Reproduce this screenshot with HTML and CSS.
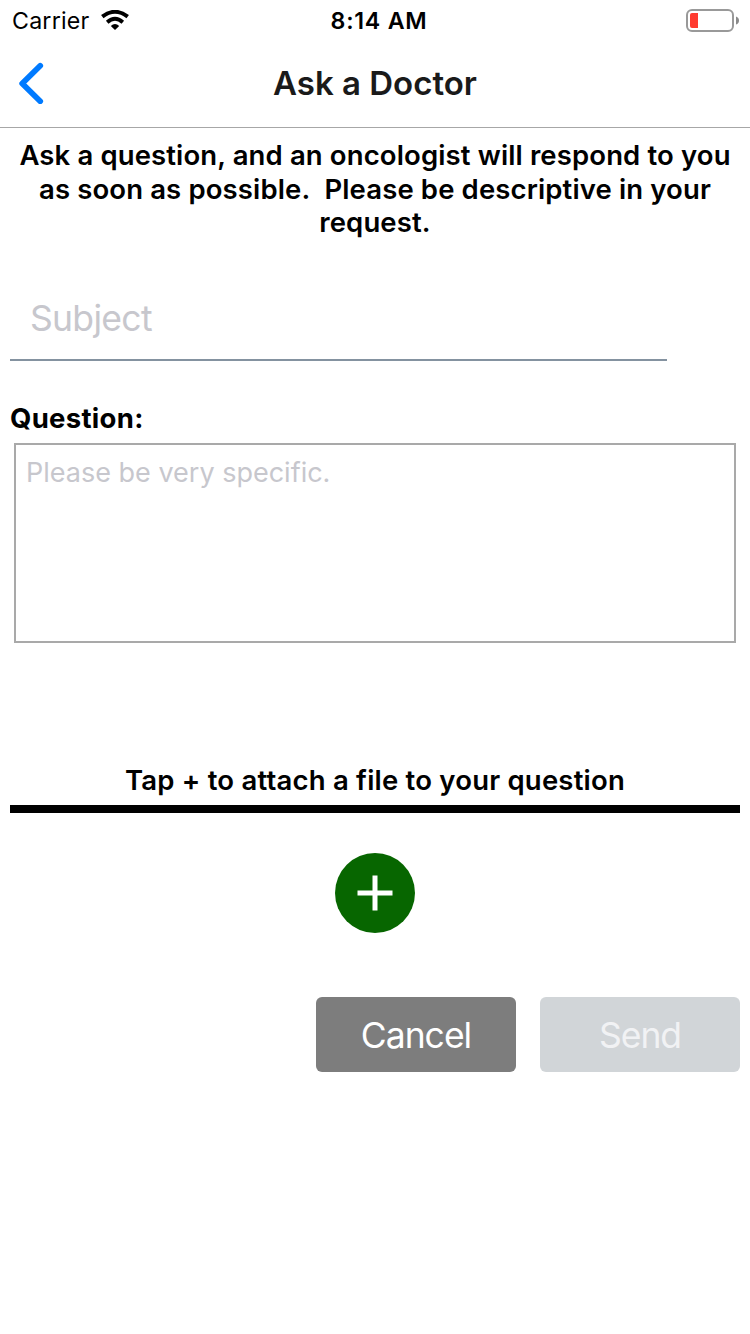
FILE: index.html
```html
<!DOCTYPE html>
<html lang="en">
<head>
  <meta charset="UTF-8">
  <title>Ask a Doctor</title>
  <link rel="stylesheet" href="styles.css">
</head>
<body>

  <!-- Status bar -->
  <div class="status">
    <div class="status-left">
      <span class="carrier">Carrier</span>
      <svg class="wifi" width="28" height="20" viewBox="0 0 28 20">
        <path d="M1.3 6.7 Q14 -3.1 26.7 6.7" fill="none" stroke="#000" stroke-width="4"/>
        <path d="M6.2 12.2 Q14 5.5 21.8 12.2" fill="none" stroke="#000" stroke-width="3.9"/>
        <path d="M14 20 L9.8 16 Q14 12 18.2 16 Z"/>
      </svg>
    </div>
    <span class="clock">8:14 AM</span>
    <svg class="battery" width="54" height="24" viewBox="0 0 54 24">
      <rect x="1" y="1" width="46" height="21" rx="5" fill="none" stroke="#999" stroke-width="2"/>
      <path d="M4 6 Q4 4 6 4 H12 V19 H6 Q4 19 4 17 Z" fill="#ff3b30"/>
      <path d="M50 7.5 Q53 8.5 53 11.5 Q53 14.5 50 15.5 Z" fill="#8a8a8a"/>
    </svg>
  </div>

  <!-- Header -->
  <div class="header">
    <svg class="back" width="26" height="42" viewBox="0 0 26 42">
      <path d="M22.2 3.8 L4.2 21.5 L22.2 39.2" fill="none" stroke="#007aff" stroke-width="5.8" stroke-linecap="round" stroke-linejoin="round"/>
    </svg>
    <h1>Ask a Doctor</h1>
  </div>

  <!-- Form -->
  <div class="content">
    <p class="intro">Ask a question, and an oncologist will respond to you<br>as soon as possible.&nbsp; Please be descriptive in your<br>request.</p>
    <div class="subject">Subject</div>
    <div class="label">Question:</div>
    <div class="question">Please be very specific.</div>
    <p class="attach">Tap + to attach a file to your question</p>
    <div class="add">
      <svg width="36" height="36" viewBox="0 0 36 36">
        <path d="M18 .5 V35.5 M.5 18 H35.5" stroke="#fff" stroke-width="5"/>
      </svg>
    </div>
    <div class="buttons">
      <div class="btn cancel">Cancel</div>
      <div class="btn send">Send</div>
    </div>
  </div>

</body>
</html>
```

FILE: styles.css
```css
* {
  box-sizing: border-box;
}

body {
  margin: 0;
  font-family: Inter, 'Liberation Sans', sans-serif;
  background-color: #fff;
  color: #000;
}

.status {
  display: grid;
  grid-template-columns: 1fr auto 1fr;
  height: 40px;
  padding: 0 10px 0 12px;
  line-height: 42px;
  font-size: 23.2px;
}

.status-left {
  display: flex;
  gap: 12px;
}

.carrier {
  letter-spacing: 0.2px;
}

.wifi {
  margin-top: 10px;
}

.clock {
  padding-left: 6px;
  font-weight: 600;
  letter-spacing: 0.75px;
}

.battery {
  justify-self: end;
  margin-top: 9px;
}

.header {
  display: grid;
  grid-template-columns: 60px 1fr 60px;
  height: 88px;
  border-bottom: 1px solid #a7a7a7;
}

.back {
  margin: 22px 0 0 18px;
}

h1 {
  margin: 0;
  font-size: 33px;
  font-weight: 600;
  line-height: 86px;
  text-align: center;
  color: #1a1a1a;
}

.content {
  padding: 11px 10px 0;
}

.intro {
  margin: 0;
  height: 101px;
  font-size: 27.5px;
  font-weight: 600;
  line-height: 33.5px;
  letter-spacing: 0.13px;
  text-align: center;
  white-space: nowrap;
}

.subject {
  width: 657px;
  height: 81px;
  margin-top: 40px;
  padding-left: 20px;
  border-bottom: 2px solid #8492a0;
  font-size: 35.5px;
  line-height: 78px;
  letter-spacing: -0.7px;
  color: #c7c7cd;
}

.label {
  height: 82px;
  padding-top: 40px;
  font-size: 27.5px;
  font-weight: 700;
  line-height: 34px;
  letter-spacing: 0.3px;
}

.question {
  height: 200px;
  margin: 0 4px;
  padding: 11px 10px;
  border: 2px solid #a9a9a9;
  font-size: 27px;
  line-height: 34px;
  color: #c7c7cd;
}

.attach {
  margin: 119px 0 40px;
  height: 51px;
  border-bottom: 8px solid #000;
  font-size: 27.5px;
  font-weight: 600;
  line-height: 36px;
  letter-spacing: 0.21px;
  text-align: center;
}

.add {
  display: flex;
  justify-content: center;
  align-items: center;
  width: 80px;
  height: 80px;
  margin: 0 auto;
  border-radius: 50%;
  background-color: #076600;
}

.buttons {
  display: flex;
  justify-content: flex-end;
  gap: 24px;
  margin-top: 64px;
}

.btn {
  width: 200px;
  height: 75px;
  border-radius: 6px;
  font-size: 35.5px;
  line-height: 78px;
  letter-spacing: -1px;
  text-align: center;
}

.cancel {
  background-color: #7d7d7d;
  color: #fff;
}

.send {
  background-color: #d1d5d8;
  color: #f1f2f4;
}
```
